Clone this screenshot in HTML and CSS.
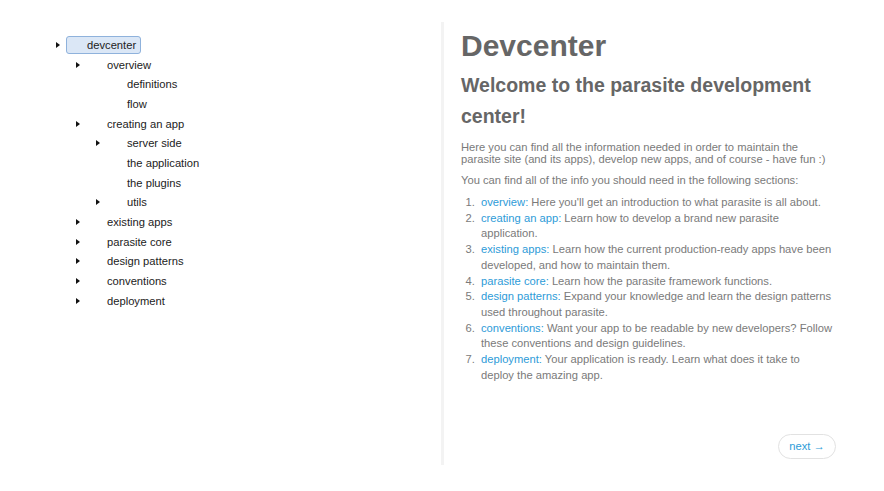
FILE: index.html
```html
<!DOCTYPE html>
<html>
<head>
<meta charset="utf-8">
<link rel="stylesheet" href="styles.css">
</head>
<body>
<div class="layout">
  <nav class="sidebar">
    <ul class="tree">
      <li>
        <div class="row"><span class="toggle"><i class="tri"></i></span><a class="node selected">devcenter</a></div>
        <ul class="tree sub">
          <li>
            <div class="row"><span class="toggle"><i class="tri"></i></span><a class="node">overview</a></div>
            <ul class="tree sub">
              <li><div class="row"><span class="toggle"></span><a class="node">definitions</a></div></li>
              <li><div class="row"><span class="toggle"></span><a class="node">flow</a></div></li>
            </ul>
          </li>
          <li>
            <div class="row"><span class="toggle"><i class="tri"></i></span><a class="node">creating an app</a></div>
            <ul class="tree sub">
              <li><div class="row"><span class="toggle"><i class="tri"></i></span><a class="node">server side</a></div></li>
              <li><div class="row"><span class="toggle"></span><a class="node">the application</a></div></li>
              <li><div class="row"><span class="toggle"></span><a class="node">the plugins</a></div></li>
              <li><div class="row"><span class="toggle"><i class="tri"></i></span><a class="node">utils</a></div></li>
            </ul>
          </li>
          <li><div class="row"><span class="toggle"><i class="tri"></i></span><a class="node">existing apps</a></div></li>
          <li><div class="row"><span class="toggle"><i class="tri"></i></span><a class="node">parasite core</a></div></li>
          <li><div class="row"><span class="toggle"><i class="tri"></i></span><a class="node">design patterns</a></div></li>
          <li><div class="row"><span class="toggle"><i class="tri"></i></span><a class="node">conventions</a></div></li>
          <li><div class="row"><span class="toggle"><i class="tri"></i></span><a class="node">deployment</a></div></li>
        </ul>
      </li>
    </ul>
  </nav>
  <main class="content">
    <h1>Devcenter</h1>
    <h2>Welcome to the parasite development center!</h2>
    <p>Here you can find all the information needed in order to maintain the parasite site (and its apps), develop new apps, and of course - have fun :)</p>
    <p class="lead-in">You can find all of the info you should need in the following sections:</p>
    <ol class="sections">
      <li><a>overview:</a> Here you'll get an introduction to what parasite is all about.</li>
      <li><a>creating an app:</a> Learn how to develop a brand new parasite application.</li>
      <li><a>existing apps:</a> Learn how the current production-ready apps have been developed, and how to maintain them.</li>
      <li><a>parasite core:</a> Learn how the parasite framework functions.</li>
      <li><a>design patterns:</a> Expand your knowledge and learn the design patterns used throughout parasite.</li>
      <li><a>conventions:</a> Want your app to be readable by new developers? Follow these conventions and design guidelines.</li>
      <li><a>deployment:</a> Your application is ready. Learn what does it take to deploy the amazing app.</li>
    </ol>
    <div class="pager"><a class="next">next &rarr;</a></div>
  </main>
</div>
</body>
</html>
```
FILE: styles.css
```css
html, body {
  margin: 0;
  padding: 0;
  background: #fff;
  font-family: "Liberation Sans", Arial, sans-serif;
}
.layout {
  display: flex;
  margin-top: 22px;
  height: 443px;
}
.sidebar {
  width: 444px;
  border-right: 3px solid #f3f3f3;
  padding: 13px 0 0 50px;
  box-sizing: border-box;
  flex: none;
}
.tree {
  list-style: none;
  margin: 0;
  padding: 0;
}
.tree.sub {
  padding-left: 20px;
}
.row {
  display: flex;
  align-items: center;
  height: 19.7px;
  font-size: 11.2px;
  color: #222;
}
.toggle {
  width: 16px;
  height: 18px;
  display: flex;
  align-items: center;
  flex: none;
}
.tri {
  display: block;
  margin-left: 6px;
  width: 0;
  height: 0;
  border-top: 3.5px solid transparent;
  border-bottom: 3.5px solid transparent;
  border-left: 4px solid #111;
}
.node {
  display: block;
  box-sizing: border-box;
  height: 18px;
  line-height: 16px;
  padding: 0 4px 0 20px;
  border: 1px solid transparent;
  border-radius: 3px;
}
.node.selected {
  background: #dbe7f6;
  border-color: #8fb2dc;
}
.content {
  flex: 1;
  padding: 0 50px 0 17px;
  color: #7a7a7a;
}
h1 {
  margin: 7px 0 0;
  font-size: 30px;
  line-height: 33px;
  font-weight: bold;
  color: #666;
}
h2 {
  margin: 8px 0 0;
  font-size: 19.5px;
  line-height: 31px;
  font-weight: bold;
  color: #666;
}
p {
  margin: 9px 0 0;
  font-size: 11.2px;
  line-height: 12px;
}
p.lead-in {
  margin-top: 9px;
}
.sections {
  margin: 9px 0 0;
  padding-left: 20px;
  font-size: 11.2px;
  line-height: 15.7px;
}
.sections li::marker {
  content: counter(list-item) ".\00a0\00a0";
}
.sections a {
  color: #2d9bd8;
}
.pager {
  display: flex;
  justify-content: flex-end;
  margin-top: 51px;
  padding-right: 0;
}
.next {
  display: block;
  box-sizing: border-box;
  width: 58px;
  height: 25px;
  line-height: 23px;
  text-align: center;
  font-size: 11.2px;
  color: #2d9bd8;
  border: 1px solid #e2e2e2;
  border-radius: 13px;
  margin-right: -2px;
}
```
